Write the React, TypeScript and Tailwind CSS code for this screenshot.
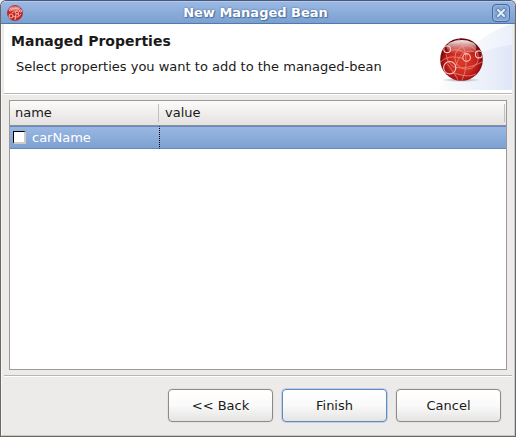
import React from "react";

function Globe({ className }: { className: string }) {
  return (
    <svg viewBox="0 0 42 42" className={className} aria-hidden="true">
      <defs>
        <radialGradient id="ball" cx="50%" cy="56%" r="54%">
          <stop offset="0" stopColor="#dd3a26" />
          <stop offset="0.55" stopColor="#cb2a20" />
          <stop offset="0.8" stopColor="#a51214" />
          <stop offset="1" stopColor="#5e0306" />
        </radialGradient>
        <linearGradient id="shine" x1="0" y1="0" x2="0" y2="1">
          <stop offset="0" stopColor="#fff" stopOpacity="0.95" />
          <stop offset="0.5" stopColor="#fff" stopOpacity="0.4" />
          <stop offset="1" stopColor="#fff" stopOpacity="0" />
        </linearGradient>
        <clipPath id="disc">
          <circle cx="21" cy="21" r="20.5" />
        </clipPath>
      </defs>
      <circle cx="21" cy="21" r="20.8" fill="url(#ball)" />
      <ellipse cx="21" cy="9" rx="14.5" ry="7" fill="url(#shine)" />
      <g clipPath="url(#disc)" fill="none" stroke="#f3a196" strokeWidth="0.8" opacity="0.8">
        <circle cx="26" cy="19" r="11.5" />
        <path d="M11 12C18 10 25 14 27 18" />
        <path d="M18 1C25 8 29 26 21 42" />
        <path d="M0 24C7 17 14 18 22 20" />
        <path d="M6 16C7 22 9 25 13 28C22 31 32 28 42 23" />
        <path d="M15 29C18 17 24 10 35 14" />
        <path d="M13 34C20 36 28 39 35 35" />
        <path d="M7 25C12 32 16 37 18 42" />
      </g>
      <g clipPath="url(#disc)" fill="none" stroke="#fac9c2" strokeWidth="1.1">
        <circle cx="7" cy="11" r="3.3" />
        <circle cx="26" cy="19" r="3.7" />
        <circle cx="38" cy="16" r="3.4" />
        <circle cx="9.5" cy="29" r="6" />
      </g>
    </svg>
  );
}

function TitleIcon() {
  return (
    <svg viewBox="0 0 16 16" className="size-4" aria-hidden="true">
      <circle cx="8" cy="8" r="7.6" fill="#c92520" stroke="#a32125" strokeWidth="0.6" />
      <ellipse cx="8" cy="3.5" rx="5" ry="2.3" fill="#fff" opacity="0.45" />
      <g fill="none" stroke="#f8c5be" strokeWidth="0.9">
        <circle cx="4" cy="11" r="2" />
        <circle cx="10" cy="7.5" r="1.5" />
        <circle cx="3.3" cy="4.8" r="1.2" />
        <circle cx="13.6" cy="6" r="1.1" />
        <path d="M4 5C7 2 12 3 13 6M6 11C9 13 12 12 14 9M5 8C7 6 8 7 9 7M9 9L8 15M11 8L12 11" />
      </g>
    </svg>
  );
}

function Banner() {
  return (
    <div className="relative h-[66px] w-[80px] shrink-0">
      <svg viewBox="0 0 80 66" className="absolute inset-0 size-full" aria-hidden="true">
        <defs>
          <linearGradient id="sweep" x1="0" y1="0" x2="1" y2="0">
            <stop offset="0" stopColor="#e3e9f8" stopOpacity="0" />
            <stop offset="0.7" stopColor="#e3e9f8" stopOpacity="0.75" />
            <stop offset="1" stopColor="#dbe3f6" />
          </linearGradient>
          <radialGradient id="shadow">
            <stop offset="0" stopColor="#777" stopOpacity="0.7" />
            <stop offset="1" stopColor="#777" stopOpacity="0" />
          </radialGradient>
        </defs>
        <path d="M0 66C20 54 36 12 80 0V66Z" fill="url(#sweep)" opacity="0.55" />
        <path d="M4 66C24 48 40 24 80 21V66Z" fill="url(#sweep)" opacity="0.75" />
        <ellipse cx="29" cy="56" rx="20" ry="2" fill="url(#shadow)" />
      </svg>
      <Globe className="absolute top-[14px] left-[8px] size-[43px]" />
    </div>
  );
}

function Divider() {
  return <div className="h-[2px] shrink-0 border-t border-[#b9b7b5] bg-white" />;
}

function WizardButton({ children, primary = false }: { children: React.ReactNode; primary?: boolean }) {
  return (
    <button
      type="button"
      className={
        "h-[33px] w-[105px] rounded-[4px] border bg-linear-to-b from-white via-[#fafafa] via-50% to-[#e5e4e2] " +
        (primary ? "border-[#6289bd] shadow-[0_0_0_1px_#bdd0e8]" : "border-[#8d8a88] shadow-[0_0_0_1px_#e4e2e0]")
      }
    >
      {children}
    </button>
  );
}

export default function App() {
  return (
    <div className="bg-[#edebe9] font-['DejaVu_Sans',sans-serif] text-[13px] leading-4 text-[#1a1a1a]">
      <div className="flex min-h-screen flex-col overflow-hidden rounded-t-[6px] border border-[#6b6765] border-t-[#46587a] bg-[#edebe9]">
        <header className="flex h-[23px] shrink-0 items-center border-t border-b border-t-[#b3cbec] border-b-[#5179ae] bg-linear-to-b from-[#9bb8e3] to-[#7ba0d0] pr-[5px] pl-[6px]">
          <TitleIcon />
          <h1 className="flex-1 pr-1 text-center font-bold text-white [text-shadow:0_0_2px_#3f6496,1px_1px_1px_#4a70a3]">
            New Managed Bean
          </h1>
          <button
            type="button"
            aria-label="Close"
            className="flex size-[18px] items-center justify-center rounded-[4px] border border-[#46699b] bg-[#86a8d6] shadow-[inset_0_0_0_1px_#98b6df]"
          >
            <svg viewBox="0 0 12 12" className="size-3" aria-hidden="true">
              <path d="M3 3L9 9M9 3L3 9" stroke="#5b80b4" strokeWidth="4" strokeLinecap="square" />
              <path d="M3 3L9 9M9 3L3 9" stroke="#e6eefa" strokeWidth="2" strokeLinecap="square" />
            </svg>
          </button>
        </header>

        <main className="flex flex-1 flex-col border-r border-b border-l border-r-[#c9c6c3] border-b-[#c9c6c3] border-l-[#f8f7f6] px-[2px]">
          <section className="flex h-[69px] shrink-0 justify-between bg-white">
            <div className="pt-[9px] pl-[7px]">
              <h2 className="text-[14px] leading-4 font-bold">Managed Properties</h2>
              <p className="mt-[10px] pl-[5px]">Select properties you want to add to the managed-bean</p>
            </div>
            <Banner />
          </section>
          <Divider />

          <div className="mx-[5px] mt-[5px] mb-[5px] flex-1 border border-[#9b9895] bg-white">
            <table className="w-full table-fixed border-separate border-spacing-0 text-left">
              <thead>
                <tr className="h-[25px] bg-linear-to-b from-[#fbfbfa] to-[#e3e1df]">
                  <th className="w-[149px] border-b border-[#8c8f96] p-0 font-normal">
                    <div className="flex h-[18px] items-center border-r border-[#c2c0be] pl-[5px]">name</div>
                  </th>
                  <th className="border-b border-[#8c8f96] p-0 pr-px font-normal">
                    <div className="flex h-[18px] items-center border-r border-[#c2c0be] pl-[6px]">value</div>
                  </th>
                </tr>
              </thead>
              <tbody>
                <tr className="h-[23px] bg-linear-to-b from-[#9bb8e3] to-[#7ba0d0] text-white">
                  <td className="border-t border-b border-[#6389be] p-0">
                    <label className="flex items-center gap-[6px] pl-[3px]">
                      <input
                        type="checkbox"
                        className="size-[13px] appearance-none border-t border-r-2 border-b-2 border-l border-t-black border-r-[#cfccc6] border-b-[#cfccc6] border-l-black bg-white checked:bg-[#5179ae]"
                      />
                      carName
                    </label>
                  </td>
                  <td className="border-t border-b border-l border-[#6389be] border-l-black p-0 [border-left-style:dotted]" />
                </tr>
              </tbody>
            </table>
          </div>

          <Divider />
          <footer className="flex shrink-0 justify-end gap-[9px] pt-[12px] pr-[11px] pb-[13px]">
            <WizardButton>&lt;&lt; Back</WizardButton>
            <WizardButton primary>Finish</WizardButton>
            <WizardButton>Cancel</WizardButton>
          </footer>
        </main>
      </div>
    </div>
  );
}
